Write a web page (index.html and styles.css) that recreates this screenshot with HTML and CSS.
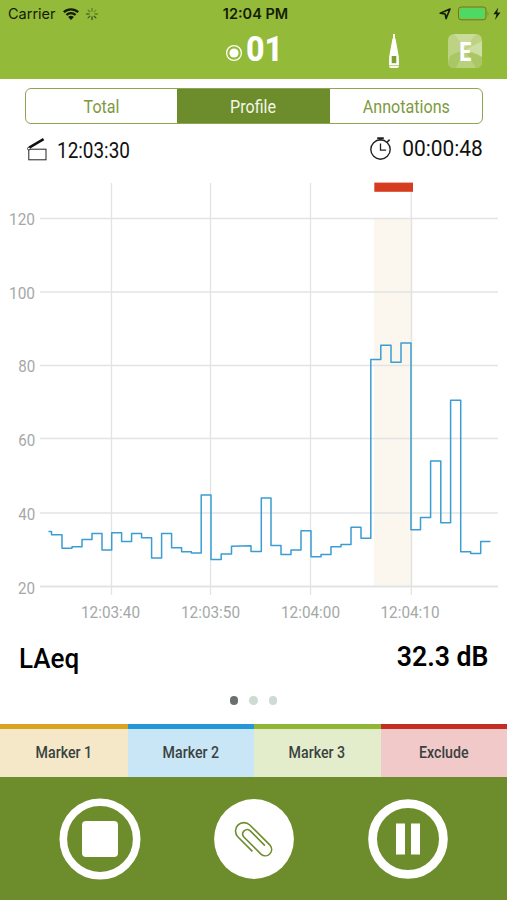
FILE: index.html
```html
<!DOCTYPE html>
<html lang="en">

<head>
    <meta charset="UTF-8">
    <meta name="viewport" content="width=device-width, initial-scale=1.0">
    <title>Sound measurement</title>
    <link rel="stylesheet" href="styles.css">
</head>

<body>

    <header class="header">
        <div class="status-bar">
            <div class="status-left">
                <span class="carrier">Carrier</span>
                <svg class="wifi" width="18" height="14" viewBox="0 0 18 14">
                    <path d="M1.8 5.2a10.4 10.4 0 0 1 14.4 0M4.4 8a6.6 6.6 0 0 1 9.2 0" fill="none" stroke="#141c06" stroke-width="2.3" />
                    <path d="M9 13L6.1 10.1a4.1 4.1 0 0 1 5.8 0z" fill="#141c06" />
                </svg>
                <svg class="spinner" width="14" height="14" viewBox="-7 -7 14 14" stroke="#3d4f19" stroke-width="1.3" stroke-linecap="round">
                    <path d="M0 -3V-5.5" opacity=".55" />
                    <path d="M2.1 -2.1L3.9 -3.9" opacity=".4" />
                    <path d="M3 0H5.5" opacity=".6" />
                    <path d="M2.1 2.1L3.9 3.9" />
                    <path d="M0 3V5.5" />
                    <path d="M-2.1 2.1L-3.9 3.9" opacity=".85" />
                    <path d="M-3 0H-5.5" opacity=".75" />
                    <path d="M-2.1 -2.1L-3.9 -3.9" opacity=".6" />
                </svg>
            </div>
            <span class="clock">12:04 PM</span>
            <svg class="battery" width="64" height="16" viewBox="0 0 64 16">
                <path d="M1.2 7.2L11 3L7 12.6L6.2 8Z" fill="none" stroke="#141c06" stroke-width="1.6" stroke-linejoin="round" />
                <rect x="19.5" y="1" width="27.5" height="12.8" rx="2.6" fill="none" stroke="#637d25" stroke-width="1" />
                <rect x="21" y="2.5" width="24.5" height="9.8" rx="1.2" fill="#4cd964" />
                <path d="M48.6 5.4q1.7 2 0 4z" fill="#637d25" />
                <path d="M59.3 1.5L54.4 8.3H57.5L56 14L61.4 6.6H58.1z" fill="#141c06" />
            </svg>
        </div>
        <div class="title-bar">
            <div class="title">
                <svg width="18" height="18" viewBox="0 0 18 18">
                    <circle cx="9" cy="9" r="7.4" fill="none" stroke="#fff" stroke-width="1.3" />
                    <circle cx="9" cy="9" r="4.6" fill="#fff" />
                </svg>
                <h1>01</h1>
            </div>
            <div class="tools">
                <svg class="meter" width="12" height="36" viewBox="0 0 12 36" fill="#fff">
                    <path d="M5 1h2v4l.6 1 3.2 17.5L11 33q0 2-2 2H3q-2 0-2-2l.2-9.5L4.4 6 5 5z" />
                    <rect x="3.7" y="23" width="4.6" height="7.2" fill="#7f9d35" />
                    <path d="M1 32.6h10" stroke="#94ba3a" stroke-width=".7" />
                </svg>
                <svg class="badge" width="36" height="36" viewBox="0 0 36 36">
                    <rect x="1" y="1" width="34" height="34" rx="6" fill="#bdd383" />
                    <path d="M7 1h22L18 15z" fill="#c9dc9a" />
                    <path d="M18 17l17-9v19z" fill="#cddfa3" />
                    <path d="M3 23q15-10 32 1v5q0 6-6 6H7q-6 0-6-6z" fill="#aac765" />
                    <path d="M18 17L29 35H9z" fill="#b9d17d" />
                    <text x="18.2" y="27.5" textLength="12" lengthAdjust="spacingAndGlyphs">E</text>
                </svg>
            </div>
        </div>
    </header>

    <main>
        <div class="tabs">
            <button><span>Total</span></button>
            <button class="active"><span>Profile</span></button>
            <button><span>Annotations</span></button>
        </div>

        <div class="times">
            <div class="time start">
                <svg width="22" height="26" viewBox="0 0 22 26">
                    <rect x="2.8" y="12.2" width="17.2" height="10.6" fill="none" stroke="#222" stroke-width="1" />
                    <path d="M3.2 10.6L17.6 2.2" stroke="#111" stroke-width="2.6" />
                    <circle cx="2.9" cy="11.6" r="1.4" fill="#fff" stroke="#222" stroke-width=".9" />
                </svg>
                <span>12:03:30</span>
            </div>
            <div class="time elapsed">
                <svg width="24" height="26" viewBox="0 0 24 26" fill="none" stroke="#222">
                    <circle cx="11.5" cy="13.5" r="9.7" stroke-width="1.4" />
                    <path d="M11.5 7.5v6.6h5.6" stroke-width="1.3" />
                    <path d="M8.2 2.2h6.6M11.5 2v2.4" stroke-width="2" />
                    <path d="M18 6.2l2.6-2.6" stroke-width="1.5" />
                </svg>
                <span>00:00:48</span>
            </div>
        </div>

        <svg class="chart" width="507" height="450" viewBox="0 180 507 450">
            <rect x="374" y="219" width="39" height="368" fill="#fbf6ee" />
            <path class="grid" d="M40 218.5H498M40 292H498M40 365.5H498M40 438.5H498M40 513H498" />
            <path class="grid" d="M111.5 183V595M210.5 183V595M310.5 183V595M411.3 183V595" />
            <path class="grid axis" d="M40 586.6H498" />
            <rect x="374.3" y="182.6" width="38.7" height="9.2" fill="#d63d20" />
            <path class="profile" d="M48.5 531.5H51.5V534.7H62V548.3H72V546.7H82V539.4H92V533.4H102V550H111.7V532.8H121.6V541.4H131.6V533.4H141.6V537.7H151.6V558H161.6V533.4H171.6V547.8H181.6V551.8H191.4V553H201.2V495H211V559.6H221.2V554H231.5V546.3L251 545.8V551.6H261.3V498H271V545.6H281V554.4H291V550H301V530.8H311V556.7H321V554.5H331V546.7H341V544.6H351V527.2H361V538.3H370.8V359.5H380.8V345.3H391V362.2H401V343H411V529.7H420.5V517.4H430.6V461H440.8V522.8H450.6V400.3H460.7V551.7H470.7V553.4H480.7V541.4H490.5" />
            <g class="scale-y">
                <text x="9" y="225" textLength="26" lengthAdjust="spacingAndGlyphs">120</text>
                <text x="9" y="298.5" textLength="26" lengthAdjust="spacingAndGlyphs">100</text>
                <text x="18.3" y="372" textLength="17" lengthAdjust="spacingAndGlyphs">80</text>
                <text x="18.3" y="445.5" textLength="17" lengthAdjust="spacingAndGlyphs">60</text>
                <text x="18.3" y="519.5" textLength="17" lengthAdjust="spacingAndGlyphs">40</text>
                <text x="18" y="593.5" textLength="17" lengthAdjust="spacingAndGlyphs">20</text>
            </g>
            <g class="scale-x">
                <text x="81" y="618" textLength="59" lengthAdjust="spacingAndGlyphs">12:03:40</text>
                <text x="181" y="618" textLength="59" lengthAdjust="spacingAndGlyphs">12:03:50</text>
                <text x="281" y="618" textLength="59" lengthAdjust="spacingAndGlyphs">12:04:00</text>
                <text x="380.5" y="618" textLength="59" lengthAdjust="spacingAndGlyphs">12:04:10</text>
            </g>
        </svg>

        <div class="reading">
            <span class="parameter">LAeq</span>
            <span class="value">32.3 dB</span>
        </div>

        <div class="pages">
            <i class="current"></i>
            <i></i>
            <i></i>
        </div>
    </main>

    <div class="markers">
        <button class="marker-1"><span>Marker 1</span></button>
        <button class="marker-2"><span>Marker 2</span></button>
        <button class="marker-3"><span>Marker 3</span></button>
        <button class="exclude"><span>Exclude</span></button>
    </div>

    <footer class="controls">
        <svg width="82" height="82" viewBox="-41 -41 82 82">
            <circle r="36.7" fill="none" stroke="#fff" stroke-width="7.6" />
            <rect x="-18" y="-18" width="36" height="36" rx="4" fill="#fff" />
        </svg>
        <svg width="82" height="82" viewBox="-41 -41 82 82">
            <circle r="39.9" fill="#fff" />
            <path d="M-1.6 12.4L-16 -2A8.4 8.4 0 0 1 -4.2 -14L16.2 6.4A6.4 6.4 0 0 1 7.2 15.4L-10.4 -2.2A4.5 4.5 0 0 1 -4 -8.4L10.9 6.6" fill="none" stroke="#6d8c2b" stroke-width="1.6" />
        </svg>
        <svg width="82" height="82" viewBox="-41 -41 82 82">
            <circle r="35.4" fill="none" stroke="#fff" stroke-width="8.8" />
            <path d="M-12 -15.5h9v31h-9zM3 -15.5h9v31H3z" fill="#fff" />
        </svg>
    </footer>

</body>

</html>
```
FILE: styles.css
```css
body {
    margin: 0;
    width: 507px;
    height: 900px;
    display: flex;
    flex-direction: column;
    overflow: hidden;
    background-color: #fff;
    font-family: Roboto, "Liberation Sans", sans-serif;
    color: #111;
}

svg {
    display: block;
    flex: none;
}

button {
    margin: 0;
    padding: 0;
    border: none;
    background: none;
    font-family: inherit;
}

/* the app uses a narrow face */
h1,
button span,
.time span,
.reading span {
    display: inline-block;
    white-space: nowrap;
    transform: scaleX(0.86);
}

.header {
    height: 79px;
    background-color: #94ba3a;
}

.status-bar {
    display: grid;
    grid-template-columns: 1fr auto 1fr;
    align-items: center;
    height: 27px;
    padding: 0 4px 0 8px;
    font-family: Inter, sans-serif;
    font-size: 14.5px;
    color: #141c06;
}

.status-left {
    display: flex;
    align-items: center;
}

.wifi {
    margin-left: 6px;
}

.spinner {
    margin-left: 5px;
}

.clock {
    font-weight: 600;
}

.battery {
    justify-self: end;
}

.title-bar {
    display: grid;
    grid-template-columns: 1fr auto 1fr;
    height: 52px;
}

.title {
    grid-column: 2;
    display: flex;
    align-items: center;
    height: 46px;
    padding-left: 4px;
}

.title svg {
    margin-top: 5px;
}

.title h1 {
    margin: 0 0 0 3px;
    font-size: 35px;
    line-height: 46px;
    font-weight: 800;
    color: #fff;
    transform: scaleX(0.92);
    transform-origin: left;
}

.tools {
    display: flex;
    justify-content: flex-end;
    gap: 47px;
    padding: 6px 24px 0 0;
}

.badge text {
    font-size: 25px;
    font-weight: 800;
    fill: #fff;
    text-anchor: middle;
}

.tabs {
    display: grid;
    grid-template-columns: 151px 153px 1fr;
    box-sizing: border-box;
    width: 458px;
    height: 36px;
    margin: 9px 0 0 25px;
    border: 1px solid #8ba554;
    border-radius: 6px;
    overflow: hidden;
}

.tabs button {
    padding-top: 1px;
    font-size: 17.5px;
    color: #7d9a40;
}

.tabs .active {
    background-color: #6d8c2b;
    color: #f3f7e8;
}

.tabs span {
    transform: scaleX(0.92);
}

.times {
    display: flex;
    justify-content: space-between;
    height: 56px;
    padding: 0 24px 0 26px;
}

.time {
    display: flex;
    align-items: center;
    height: 26px;
    font-size: 22px;
}

.start {
    margin-top: 13px;
    gap: 9px;
}

.start span {
    margin-top: 1px;
    transform-origin: left;
}

.elapsed {
    margin-top: 12px;
    gap: 5px;
}

.elapsed span {
    margin-top: -2px;
    transform: scaleX(0.95);
    transform-origin: right;
}

.grid {
    fill: none;
    stroke: #e2e4e4;
    stroke-width: 1.3;
}

.axis {
    stroke-width: 2;
}

.profile {
    fill: none;
    stroke: #3b9dd2;
    stroke-width: 1.5;
    stroke-linejoin: round;
}

.scale-y,
.scale-x {
    font-size: 17px;
    fill: #a4a9a7;
}

.reading {
    display: flex;
    justify-content: space-between;
    height: 62px;
    padding: 0 19px;
    font-size: 28px;
    line-height: 57px;
    font-weight: 500;
    color: #000;
}

.reading .parameter {
    transform: scaleX(0.93);
    transform-origin: left;
}

.reading .value {
    margin-top: -2px;
    font-weight: 600;
    transform: scaleX(0.95);
    transform-origin: right;
}

.pages {
    display: flex;
    justify-content: center;
    gap: 11px;
    height: 32px;
    padding-top: 4px;
    box-sizing: border-box;
}

.pages i {
    width: 8.6px;
    height: 8.6px;
    border-radius: 50%;
    background-color: #cddbd2;
}

.pages .current {
    background-color: #6b706d;
}

.markers {
    display: grid;
    grid-template-columns: 127.5px 126.5px 126.5px 1fr;
    height: 53px;
}

.markers button {
    padding-bottom: 2px;
    border-top-width: 5px;
    border-top-style: solid;
    font-size: 16.5px;
    font-weight: 500;
}

.markers span {
    color: #3a4241;
}

.marker-1 {
    background-color: #f5e8c8;
    border-color: #d9a520;
}

.marker-2 {
    background-color: #c9e6f7;
    border-color: #2498d7;
}

.marker-3 {
    background-color: #e4edcb;
    border-color: #91b633;
}

.exclude {
    background-color: #f0c9c8;
    border-color: #c32d24;
}

.controls {
    flex: 1;
    display: flex;
    justify-content: center;
    align-items: center;
    gap: 72px;
    background-color: #6d8c2b;
}
```
